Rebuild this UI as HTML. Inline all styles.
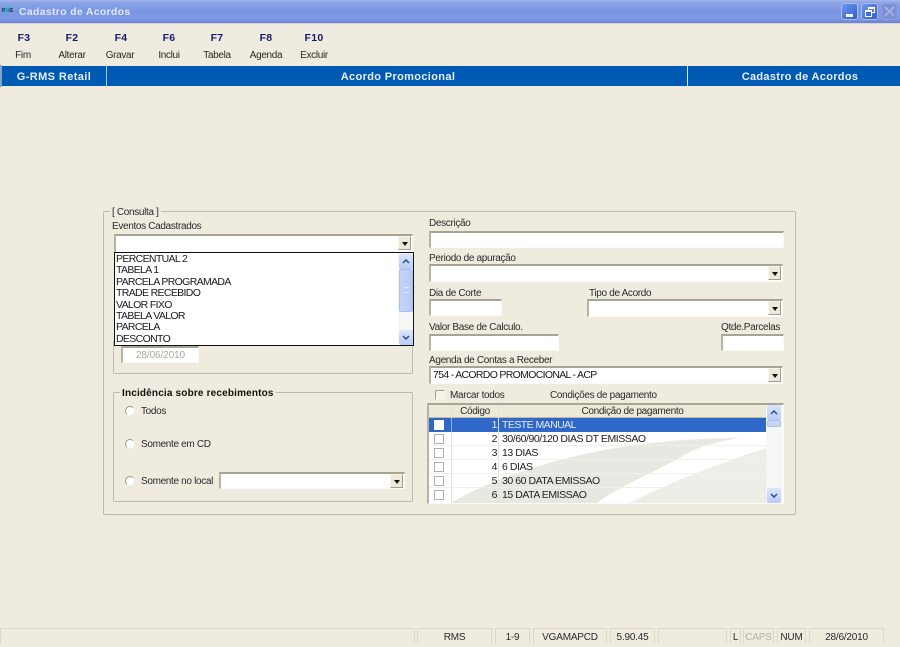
<!DOCTYPE html>
<html><head><meta charset="utf-8"><title>Cadastro de Acordos</title>
<style>
html,body{margin:0;padding:0}
body{width:900px;height:643px;overflow:hidden;position:relative;background:#efebdf;font-family:"Liberation Sans",sans-serif;font-size:10px;color:#2a2a2a;letter-spacing:-.33px}
div,span{position:absolute;box-sizing:border-box;white-space:nowrap}
.t{line-height:12px;height:12px}
.c{text-align:center}
.in{background:#fff;border-style:solid;border-width:2px 1px 1px 2px;border-color:#a6a493 #fbfaf5 #fbfaf5 #b5b3a3}
.btn{background:#ece9d8;border:1px solid;border-color:#f8f6ee #9f9d8e #9f9d8e #f8f6ee;width:13px;height:14px}
.btn:after{content:"";position:absolute;left:3px;top:5px;border:3.5px solid transparent;border-top:4px solid #111;border-bottom:0}
.gb{border:1px solid #bdbbab;border-radius:2px}
.k{font-weight:bold;color:#1a1a6e;font-size:10.5px;letter-spacing:.3px}
.sb{border:1px solid #dcd9cb;border-bottom:0;top:628px;height:15px;line-height:18px;text-align:center;font-size:10px;letter-spacing:-.2px}
.r{width:10px;height:10px;border-radius:50%;background:#fff;border:1px solid;border-color:#9a988a #f2f0e8 #f2f0e8 #9a988a}
.ck{width:10px;height:10px;background:#fff;border:1px solid #b5b3a8;left:434px}
.row{left:429px;width:337px;height:14px;border-bottom:1px solid #f1efe6}
.d{font-size:10.5px;line-height:13px;letter-spacing:-.45px;color:#222}
.n{left:452px;width:45px;text-align:right}
.sbtn{background:linear-gradient(#dbe5fb,#b9cbf7);border-radius:2px;width:14px;height:15px}
.sbtn svg{position:absolute;left:3px;top:5px}
</style></head><body>

<!-- title bar -->
<div style="left:0;top:0;width:900px;height:23px;background:linear-gradient(#a3b6ec 0,#8ba3e6 12%,#7b96e2 50%,#7f9ae4 78%,#6d82d6 100%)"></div>
<div style="left:0;top:23px;width:900px;height:1px;background:#d9d3d6"></div>
<div style="left:2px;top:9px;font-size:5px;line-height:5px;font-weight:bold;color:#102040;letter-spacing:0">RMS</div>
<div style="left:5px;top:5px;width:4px;height:9px;background:#30c0d0;transform:skew(-25deg);opacity:.7"></div>
<div class="t" style="left:19px;top:6px;color:#e2e8fa;font-weight:bold;font-size:10.5px;letter-spacing:.3px">Cadastro de Acordos</div>
<div style="left:841px;top:3px;width:17px;height:17px;background:linear-gradient(135deg,#6f97ee,#2e5ecb);border:1px solid #a9bcef;border-radius:3px"><div style="left:4px;top:10px;width:7px;height:3px;background:#fff"></div></div>
<div style="left:861px;top:3px;width:17px;height:17px;background:linear-gradient(135deg,#6f97ee,#2e5ecb);border:1px solid #a9bcef;border-radius:3px"><div style="left:6px;top:3px;width:7px;height:6px;border:1px solid #fff;border-top-width:2px"></div><div style="left:3px;top:6px;width:7px;height:7px;border:1px solid #fff;border-top-width:2px;background:#3f6dd6"></div></div>
<div style="left:881px;top:3px;width:17px;height:17px;background:#7e8fd6;border:1px solid #8fa0e0;border-radius:3px"><svg style="position:absolute;left:2px;top:2px" width="11" height="11"><path d="M1 1L10 10M10 1L1 10" stroke="#a9b5e4" stroke-width="1.6"/></svg></div>

<!-- toolbar -->
<div class="t c k" style="left:9px;top:32px;width:30px">F3</div><div class="t c" style="left:4px;top:50px;width:38px">Fim</div>
<div class="t c k" style="left:57px;top:32px;width:30px">F2</div><div class="t c" style="left:52px;top:50px;width:40px">Alterar</div>
<div class="t c k" style="left:106px;top:32px;width:30px">F4</div><div class="t c" style="left:100px;top:50px;width:40px">Gravar</div>
<div class="t c k" style="left:154px;top:32px;width:30px">F6</div><div class="t c" style="left:149px;top:50px;width:40px">Inclui</div>
<div class="t c k" style="left:202px;top:32px;width:30px">F7</div><div class="t c" style="left:197px;top:50px;width:40px">Tabela</div>
<div class="t c k" style="left:251px;top:32px;width:30px">F8</div><div class="t c" style="left:246px;top:50px;width:40px">Agenda</div>
<div class="t c k" style="left:299px;top:32px;width:30px">F10</div><div class="t c" style="left:294px;top:50px;width:40px">Excluir</div>

<!-- blue band -->
<div style="left:0;top:66px;width:900px;height:20px;background:#0059b2"></div>
<div style="left:0;top:65px;width:2px;height:22px;background:#7fa6c8"></div>
<div style="left:106px;top:65px;width:1px;height:22px;background:#a9c6dd"></div>
<div style="left:687px;top:65px;width:1px;height:22px;background:#dbe6ee"></div>
<div class="c" style="left:2px;top:71px;width:104px;color:#e8eef6;font-weight:bold;font-size:11px;line-height:13px;letter-spacing:.4px">G-RMS Retail</div>
<div class="c" style="left:107px;top:71px;width:582px;color:#e8eef6;font-weight:bold;font-size:11px;line-height:13px;letter-spacing:.35px">Acordo Promocional</div>
<div class="c" style="left:694px;top:71px;width:212px;color:#e8eef6;font-weight:bold;font-size:11px;line-height:13px;letter-spacing:.3px">Cadastro de Acordos</div>

<!-- main group -->
<div class="gb" style="left:103px;top:211px;width:693px;height:304px"></div>
<div class="t" style="left:110px;top:207px;background:#efebdf;padding:0 2px">[ Consulta ]</div>
<div class="t" style="left:112px;top:221px">Eventos Cadastrados</div>
<div class="in" style="left:114px;top:234px;width:299px;height:19px"></div>
<div class="btn" style="left:398px;top:236px"></div>

<div class="gb" style="left:113px;top:340px;width:300px;height:34px"></div>
<div class="in" style="left:121px;top:346px;width:78px;height:17px;color:#a9a799;text-align:center;line-height:15px;font-size:10px;letter-spacing:-.1px">28/06/2010</div>

<!-- dropdown list -->
<div style="left:114px;top:252px;width:300px;height:93.5px;background:#fff;border:1px solid #111"></div>
<div style="left:116px;top:254px;font-size:10.5px;line-height:11.4px;white-space:pre;color:#1a1a1a;letter-spacing:-.65px">PERCENTUAL 2
TABELA 1
PARCELA PROGRAMADA
TRADE RECEBIDO
VALOR FIXO
TABELA VALOR
PARCELA
DESCONTO</div>
<div style="left:398px;top:253px;width:15px;height:91px;background:#f6f6f4"></div>
<div class="sbtn" style="left:399px;top:254px"><svg width="8" height="5"><path d="M1 4L4 1L7 4" fill="none" stroke="#2a4d8f" stroke-width="1.5"/></svg></div>
<div style="left:399px;top:269px;width:14px;height:43px;background:linear-gradient(90deg,#c6d4f8,#b6c9f6);border:1px solid #a9bdf0;border-radius:2px"><div style="left:4px;top:17px;width:5px;height:6px;border-top:1px solid #e4ebfd;border-bottom:1px solid #e4ebfd"></div></div>
<div class="sbtn" style="left:399px;top:330px"><svg width="8" height="5"><path d="M1 1L4 4L7 1" fill="none" stroke="#2a4d8f" stroke-width="1.5"/></svg></div>

<!-- incidencia -->
<div class="gb" style="left:113px;top:392px;width:300px;height:110px"></div>
<div class="t" style="left:120px;top:388px;background:#efebdf;padding:0 2px;font-weight:bold;color:#111;letter-spacing:.17px">Incidência sobre recebimentos</div>
<div class="r" style="left:125px;top:406px"></div><div class="t" style="left:141px;top:406px">Todos</div>
<div class="r" style="left:125px;top:439px"></div><div class="t" style="left:141px;top:439px">Somente em CD</div>
<div class="r" style="left:125px;top:476px"></div><div class="t" style="left:141px;top:476px">Somente no local</div>
<div class="in" style="left:219px;top:472px;width:186px;height:17px"></div>
<div class="btn" style="left:390px;top:474px"></div>

<!-- right col -->
<div class="t" style="left:429px;top:218px">Descrição</div>
<div class="in" style="left:429px;top:231px;width:355px;height:17px"></div>
<div class="t" style="left:429px;top:253px">Periodo de apuração</div>
<div class="in" style="left:429px;top:264px;width:354px;height:18px"></div>
<div class="btn" style="left:768px;top:266px"></div>
<div class="t" style="left:429px;top:288px">Dia de Corte</div>
<div class="in" style="left:429px;top:299px;width:73px;height:17px"></div>
<div class="t" style="left:589px;top:288px">Tipo de Acordo</div>
<div class="in" style="left:587px;top:299px;width:196px;height:18px"></div>
<div class="btn" style="left:768px;top:301px"></div>
<div class="t" style="left:429px;top:322px">Valor Base de Calculo.</div>
<div class="in" style="left:429px;top:334px;width:130px;height:17px"></div>
<div class="t" style="left:721px;top:322px">Qtde.Parcelas</div>
<div class="in" style="left:721px;top:334px;width:63px;height:17px"></div>
<div class="t" style="left:429px;top:355px">Agenda de Contas a Receber</div>
<div class="in" style="left:429px;top:366px;width:354px;height:18px;font-size:10.5px;line-height:15px;padding-left:2px;color:#1a1a1a;letter-spacing:-.68px">754 - ACORDO PROMOCIONAL - ACP</div>
<div class="btn" style="left:768px;top:368px"></div>

<div class="ck" style="left:435px;top:390px;border-color:#a5a394 #f5f3ea #f5f3ea #a5a394;background:#f5f3ea"></div>
<div class="t" style="left:450px;top:390px">Marcar todos</div>
<div class="t" style="left:550px;top:390px">Condições de pagamento</div>

<!-- grid -->
<div style="left:427px;top:403px;width:357px;height:101px;background:#fff;border-style:solid;border-width:2px 1px 1px 2px;border-color:#a6a493 #fbfaf5 #fbfaf5 #b5b3a3;overflow:hidden"></div>
<svg style="position:absolute;left:429px;top:418px" width="337" height="85"><path d="M22 85C60 62 160 20 311 20C285 24 270 29 255 37C235 50 190 68 168 85Z" fill="#e8e8e2"/><path d="M337 30C300 42 250 60 200 85L337 85Z" fill="#eeeee9"/></svg>
<div style="left:429px;top:405px;width:337px;height:13px;background:#ece9d8;border-bottom:1px solid #bdbbab"></div>
<div style="left:451px;top:405px;width:1px;height:98px;background:#e6e3d6"></div>
<div style="left:498px;top:405px;width:1px;height:98px;background:#e6e3d6"></div>
<div class="t c" style="left:452px;top:406px;width:46px">Código</div>
<div class="t c" style="left:499px;top:406px;width:267px">Condição de pagamento</div>

<div class="row" style="top:418px;background:#2f68c8;border:0"></div>
<div class="row" style="top:432px"></div><div class="row" style="top:446px"></div><div class="row" style="top:460px"></div><div class="row" style="top:474px"></div>
<div style="left:451px;top:418px;width:1px;height:14px;background:#8fb0e4"></div>
<div style="left:498px;top:418px;width:1px;height:14px;background:#d8e2f4"></div>

<div class="ck" style="top:420px;border-color:#fff"></div>
<div class="ck" style="top:434px"></div><div class="ck" style="top:448px"></div><div class="ck" style="top:462px"></div><div class="ck" style="top:476px"></div><div class="ck" style="top:490px"></div>

<div class="d n" style="top:419px;color:#e8eef8">1</div>
<div class="d n" style="top:433px">2</div>
<div class="d n" style="top:447px">3</div>
<div class="d n" style="top:461px">4</div>
<div class="d n" style="top:475px">5</div>
<div class="d n" style="top:489px">6</div>
<div class="d" style="left:502px;top:419px;color:#e8eef8;letter-spacing:-.55px">TESTE MANUAL</div>
<div class="d" style="left:502px;top:433px">30/60/90/120 DIAS DT EMISSAO</div>
<div class="d" style="left:502px;top:447px">13 DIAS</div>
<div class="d" style="left:502px;top:461px">6 DIAS</div>
<div class="d" style="left:502px;top:475px">30 60 DATA EMISSAO</div>
<div class="d" style="left:502px;top:489px">15 DATA EMISSAO</div>

<div style="left:766px;top:405px;width:16px;height:98px;background:#f6f6f4"></div>
<div class="sbtn" style="left:767px;top:405px"><svg width="8" height="5"><path d="M1 4L4 1L7 4" fill="none" stroke="#2a4d8f" stroke-width="1.5"/></svg></div>
<div style="left:767px;top:420px;width:14px;height:7px;background:#c6d4f8;border:1px solid #a9bdf0;border-radius:2px"></div>
<div class="sbtn" style="left:767px;top:488px"><svg width="8" height="5"><path d="M1 1L4 4L7 1" fill="none" stroke="#2a4d8f" stroke-width="1.5"/></svg></div>

<!-- status bar -->
<div class="sb" style="left:0;width:415px"></div>
<div class="sb" style="left:417px;width:75px">RMS</div>
<div class="sb" style="left:495px;width:35px">1-9</div>
<div class="sb" style="left:533px;width:74px">VGAMAPCD</div>
<div class="sb" style="left:610px;width:45px">5.90.45</div>
<div class="sb" style="left:658px;width:69px"></div>
<div class="sb" style="left:730px;width:11px">L</div>
<div class="sb" style="left:743px;width:31px;color:#b5b3a8">CAPS</div>
<div class="sb" style="left:777px;width:29px">NUM</div>
<div class="sb" style="left:809px;width:75px">28/6/2010</div>
</body></html>
